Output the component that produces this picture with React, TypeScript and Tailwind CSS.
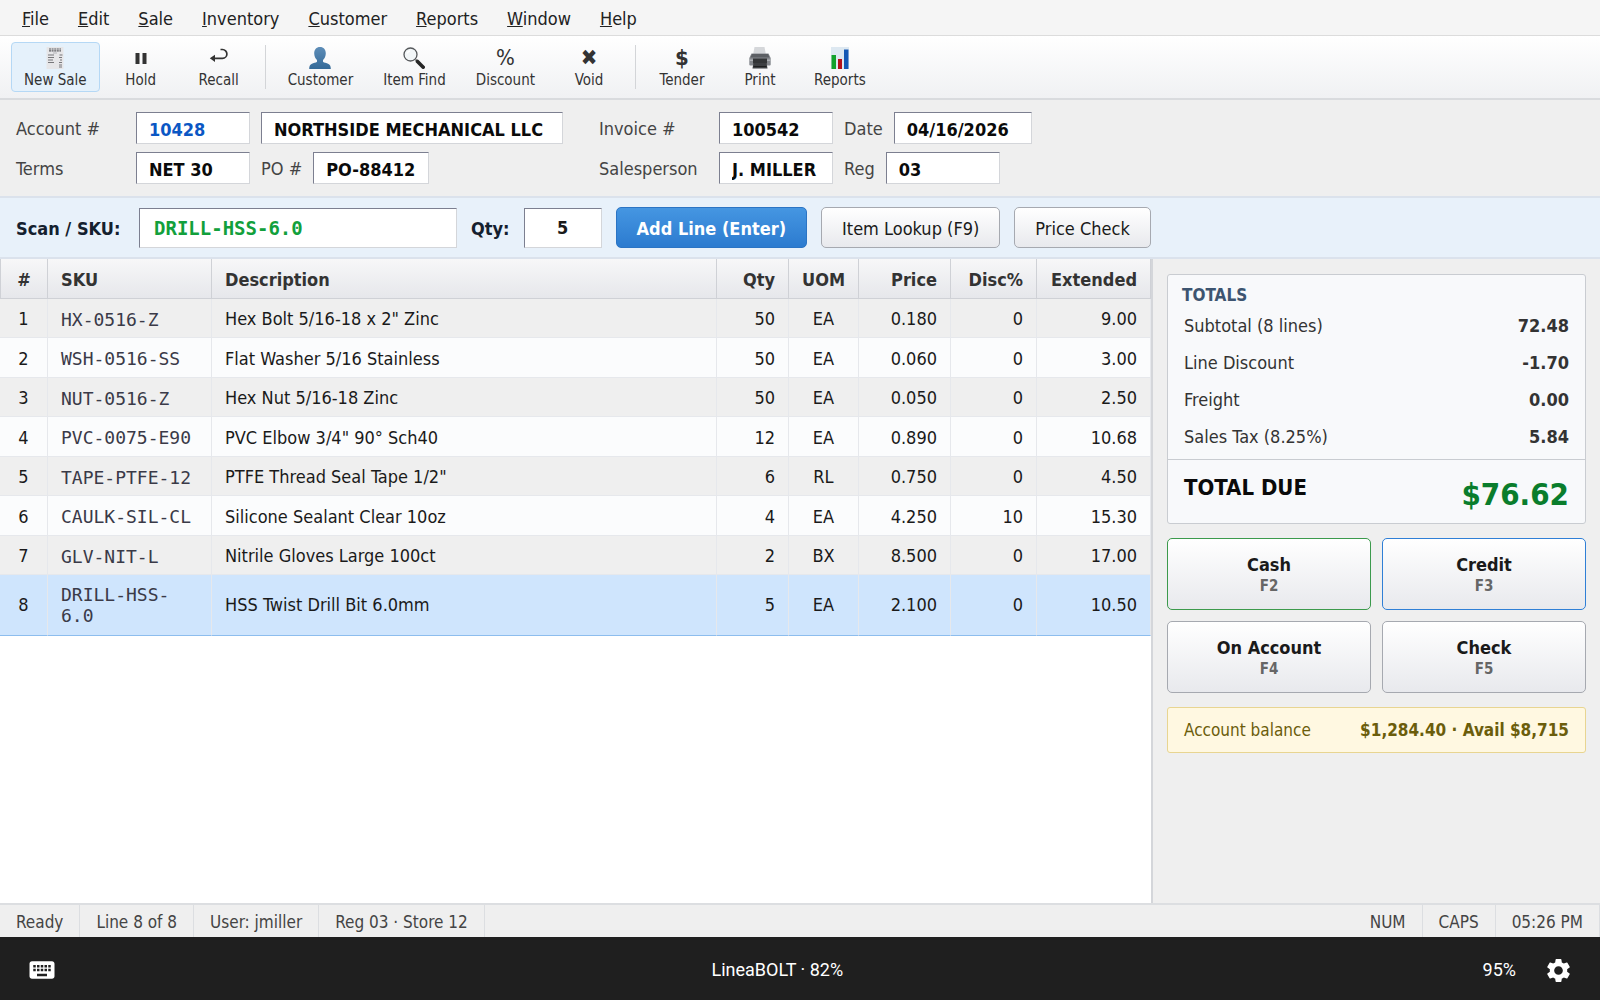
import { Fragment, useState } from "react";
import type { ReactNode } from "react";
import clsx from "clsx";
import { MdKeyboard, MdSettings } from "react-icons/md";

const ReceiptIcon = () => (
  <svg viewBox="0 0 22 22" className="size-[22px]">
    <path d="M2.500 0h17v22h-17z" fill="#e6e6e8" />
    <path d="M5 2h12M5 3.800h12" stroke="#5d5d60" strokeWidth="1.200" strokeDasharray="2 .6" />
    <path d="M4 8h6M4 10.500h6M4 13h5M4 15.500h6M15.500 8h3M15 10.500h3M16 13h2M15 15.500h3M15 18h3M15 20h3" stroke="#77777a" strokeWidth="1" />
    <path d="M9 6h4" stroke="#b4b4b8" strokeWidth="1" />
  </svg>
);

const PauseIcon = () => (
  <svg viewBox="0 0 22 22" className="size-[22px]" fill="#333">
    <path d="M5.500 6h4v11h-4zM12.500 6h4v11h-4z" />
  </svg>
);

const RecallIcon = () => (
  <svg viewBox="0 0 22 22" className="size-[22px]">
    <path d="M12.500 2.500h2a4.300 4.300 0 0 1 0 8.800H6" fill="none" stroke="#333" strokeWidth="1.700" />
    <path d="M1.800 11.300l5.200-3.600v7.200z" fill="#333" />
  </svg>
);

const PersonIcon = () => (
  <svg viewBox="0 0 22 22" className="size-[22px]">
    <defs>
      <linearGradient id="person" x1="0" y1="0" x2="0" y2="1">
        <stop offset="0" stopColor="#5d8db8" />
        <stop offset="1" stopColor="#356a98" />
      </linearGradient>
    </defs>
    <path
      d="M11 0c3.700 0 5.800 2.700 5.800 6.300 0 3-1.200 5.300-2.800 6.700v1.800c1 1 3.500 1.200 5.500 2.200 1.600.8 2.300 2.300 2.300 5H.2c0-2.700.7-4.200 2.300-5 2-1 4.500-1.200 5.500-2.200V13C6.400 11.600 5.200 9.300 5.200 6.300 5.200 2.700 7.300 0 11 0z"
      fill="url(#person)"
    />
  </svg>
);

const FindIcon = () => (
  <svg viewBox="0 0 22 22" className="size-[22px]">
    <path d="M12.500 12.500l3 3" stroke="#888" strokeWidth="2" />
    <path d="M14.500 14.500l5.700 5.700" stroke="#262626" strokeWidth="3.600" strokeLinecap="round" />
    <circle cx="7.500" cy="7.500" r="6.500" fill="#f2f6f8" stroke="#55585b" strokeWidth="1.300" />
    <path d="M4 6.500a4 4 0 0 1 3-2.500" stroke="#fff" strokeWidth="1.500" fill="none" />
  </svg>
);

const PrinterIcon = () => (
  <svg viewBox="0 0 22 22" className="size-[22px]">
    <path d="M5.500 0h10l1.500 8H4z" fill="#d5d7da" />
    <path d="M2.500 6.500h17l2.200 4.500v6.500q0 1-1 1H1.300q-1 0-1-1V11z" fill="#85888d" />
    <path d="M3 7h16l1.500 3.500h-19z" fill="#5c5f64" />
    <path d="M.5 12.500h21v1.500H.5z" fill="#b0b3b7" />
    <path d="M4 11.500h14v5H4z" fill="#333537" />
    <path d="M4.500 16h13l1 5.500h-15z" fill="#3d3f42" />
    <path d="M4.500 19.500h13" stroke="#1e1f20" strokeWidth="1" />
  </svg>
);

const ChartIcon = () => (
  <svg viewBox="0 0 22 22" className="size-[22px]">
    <path d="M2 0h18v22H2z" fill="#dde8f1" />
    <path d="M2.500 8h4.500v14H2.500z" fill="#13a22c" />
    <path d="M9 12h4v10H9z" fill="#b5121b" />
    <path d="M15 2.500h4.500V22H15z" fill="#1458b5" />
  </svg>
);

const Glyph = ({ children }: { children: ReactNode }) => (
  <span className="text-[22px] leading-[22px] text-[#333]">{children}</span>
);

const menus = ["File", "Edit", "Sale", "Inventory", "Customer", "Reports", "Window", "Help"];

const toolGroups = [
  [
    { label: "New Sale", icon: <ReceiptIcon />, active: true },
    { label: "Hold", icon: <PauseIcon /> },
    { label: "Recall", icon: <RecallIcon /> },
  ],
  [
    { label: "Customer", icon: <PersonIcon /> },
    { label: "Item Find", icon: <FindIcon /> },
    { label: "Discount", icon: <Glyph>%</Glyph> },
    { label: "Void", icon: <Glyph>✖</Glyph> },
  ],
  [
    { label: "Tender", icon: <Glyph><b>$</b></Glyph> },
    { label: "Print", icon: <PrinterIcon /> },
    { label: "Reports", icon: <ChartIcon /> },
  ],
];

const lines = [
  { sku: "HX-0516-Z", desc: 'Hex Bolt 5/16-18 x 2" Zinc', qty: 50, uom: "EA", price: "0.180", disc: 0, ext: "9.00" },
  { sku: "WSH-0516-SS", desc: "Flat Washer 5/16 Stainless", qty: 50, uom: "EA", price: "0.060", disc: 0, ext: "3.00" },
  { sku: "NUT-0516-Z", desc: "Hex Nut 5/16-18 Zinc", qty: 50, uom: "EA", price: "0.050", disc: 0, ext: "2.50" },
  { sku: "PVC-0075-E90", desc: 'PVC Elbow 3/4" 90° Sch40', qty: 12, uom: "EA", price: "0.890", disc: 0, ext: "10.68" },
  { sku: "TAPE-PTFE-12", desc: 'PTFE Thread Seal Tape 1/2"', qty: 6, uom: "RL", price: "0.750", disc: 0, ext: "4.50" },
  { sku: "CAULK-SIL-CL", desc: "Silicone Sealant Clear 10oz", qty: 4, uom: "EA", price: "4.250", disc: 10, ext: "15.30" },
  { sku: "GLV-NIT-L", desc: "Nitrile Gloves Large 100ct", qty: 2, uom: "BX", price: "8.500", disc: 0, ext: "17.00" },
  { sku: "DRILL-HSS-6.0", desc: "HSS Twist Drill Bit 6.0mm", qty: 5, uom: "EA", price: "2.100", disc: 0, ext: "10.50" },
];

const columns = [
  { title: "#", width: "w-12", align: "text-center" },
  { title: "SKU", width: "w-[164px]", align: "text-left" },
  { title: "Description", width: "", align: "text-left" },
  { title: "Qty", width: "w-[72px]", align: "text-right" },
  { title: "UOM", width: "w-[70px]", align: "text-center" },
  { title: "Price", width: "w-[92px]", align: "text-right" },
  { title: "Disc%", width: "w-[86px]", align: "text-right" },
  { title: "Extended", width: "w-[114px]", align: "text-right" },
];

const totals = [
  ["Subtotal (8 lines)", "72.48"],
  ["Line Discount", "-1.70"],
  ["Freight", "0.00"],
  ["Sales Tax (8.25%)", "5.84"],
];

const payments = [
  { label: "Cash", shortcut: "F2", border: "border-[#3c9a4c]" },
  { label: "Credit", shortcut: "F3", border: "border-[#2f7fd6]" },
  { label: "On Account", shortcut: "F4", border: "border-[#a6a9b0]" },
  { label: "Check", shortcut: "F5", border: "border-[#a6a9b0]" },
];

const sunken = "border border-t-[#7c7f90] border-l-[#7c7f90] border-r-[#d4d6da] border-b-[#d4d6da] bg-white";

interface FieldProps {
  id: string;
  label: string;
  value: string;
  labelClass?: string;
  className?: string;
}

function Field({ id, label, value, labelClass, className = "w-[114px] text-[#0a0a0a]" }: FieldProps) {
  return (
    <>
      <label htmlFor={id} className={clsx("pt-0.5 text-[#444]", labelClass)}>
        {label}
      </label>
      <input id={id} defaultValue={value} className={clsx("h-8 px-3 pt-0.5 font-bold", sunken, className)} />
    </>
  );
}

export default function App() {
  const [selected, setSelected] = useState(7);

  return (
    <div className="flex min-h-screen flex-col bg-[#efefef] font-['DejaVu_Sans_Condensed','Noto_Sans',sans-serif] text-[18px] leading-6 text-[#1a1a1a]">
      <nav className="flex h-9 items-center gap-px border-b border-[#dcdcdc] bg-[#f5f5f5] px-2 pt-0.5">
        {menus.map((menu) => (
          <button key={menu} className="px-[14px] text-[#222]">
            <span className="underline">{menu[0]}</span>
            {menu.slice(1)}
          </button>
        ))}
      </nav>

      <div className="flex h-16 items-center gap-1 border-b-2 border-[#d9dbde] bg-linear-to-b from-white to-[#f0f1f3] px-[11px]">
        {toolGroups.map((group, i) => (
          <Fragment key={i}>
            {i > 0 && <div className="mx-[5px] h-11 w-px bg-[#d3d5d8]" />}
            {group.map((tool) => (
              <button
                key={tool.label}
                className={clsx(
                  "flex h-[50px] min-w-[74px] flex-col items-center justify-center gap-px rounded border px-3 pt-0.5 text-[15px] leading-5 text-[#333]",
                  "active" in tool && tool.active ? "border-[#b5d8f5] bg-[#e5f1fb]" : "border-transparent"
                )}
              >
                {tool.icon}
                {tool.label}
              </button>
            ))}
          </Fragment>
        ))}
      </div>

      <section className="flex gap-9 border-b-2 border-[#dbe2ec] px-4 pt-3 pb-3">
        <div className="flex flex-col gap-2">
          <div className="flex items-center gap-[11px]">
            <Field id="account" label="Account #" value="10428" labelClass="w-[109px]" className="w-[114px] text-[#0b57c4]" />
            <input aria-label="Customer name" defaultValue="NORTHSIDE MECHANICAL LLC" className={clsx("h-8 w-[302px] px-3 pt-0.5 font-bold text-[#0a0a0a]", sunken)} />
          </div>
          <div className="flex items-center gap-[11px]">
            <Field id="terms" label="Terms" value="NET 30" labelClass="w-[109px]" />
            <Field id="po" label="PO #" value="PO-88412" className="w-[116px] text-[#0a0a0a]" />
          </div>
        </div>
        <div className="flex flex-col gap-2">
          <div className="flex items-center gap-[11px]">
            <Field id="invoice" label="Invoice #" value="100542" labelClass="w-[109px]" />
            <Field id="date" label="Date" value="04/16/2026" className="w-[138px] text-[#0a0a0a]" />
          </div>
          <div className="flex items-center gap-[11px]">
            <Field id="salesperson" label="Salesperson" value="J. MILLER" labelClass="w-[109px]" />
            <Field id="register" label="Reg" value="03" />
          </div>
        </div>
      </section>

      <form className="flex h-[61px] items-center gap-[14px] border-b-2 border-[#dbe2ec] bg-[#e8f1fa] px-4" onSubmit={(e) => e.preventDefault()}>
        <label htmlFor="sku" className="w-[109px] pt-0.5 font-bold text-[#14202e]">
          Scan / SKU:
        </label>
        <input
          id="sku"
          defaultValue="DRILL-HSS-6.0"
          className={clsx("h-10 w-[318px] px-[14px] font-['DejaVu_Sans_Mono',monospace] text-[19px] font-bold text-[#12a03c]", sunken)}
        />
        <label htmlFor="qty" className="pt-0.5 font-bold text-[#14202e]">
          Qty:
        </label>
        <input id="qty" defaultValue="5" className={clsx("h-10 w-[78px] text-center font-bold", sunken)} />
        <button className="h-[41px] rounded-[5px] border border-[#2b74c4] bg-linear-to-b from-[#4596e2] to-[#2c7bcf] px-5 pt-0.5 font-bold text-white">
          Add Line (Enter)
        </button>
        <button type="button" className="h-[41px] rounded-[5px] border border-[#a6a9b0] bg-linear-to-b from-white to-[#e8e9ed] px-5 pt-0.5">
          Item Lookup (F9)
        </button>
        <button type="button" className="h-[41px] rounded-[5px] border border-[#a6a9b0] bg-linear-to-b from-white to-[#e8e9ed] px-5 pt-0.5">
          Price Check
        </button>
      </form>

      <main className="flex flex-1">
        <div className="flex-1 bg-white">
          <table className="w-full table-fixed border-separate border-spacing-0">
            <thead>
              <tr className="h-10">
                {columns.map((col) => (
                  <th
                    key={col.title}
                    className={clsx(
                      "border-r border-b border-[#cfd1d6] bg-linear-to-b from-[#f7f7f8] to-[#e6e7eb] px-[13px] pt-0.5 text-[#333] first:border-l first:px-0",
                      col.title === "UOM" && "px-0",
                      col.width,
                      col.align
                    )}
                  >
                    {col.title}
                  </th>
                ))}
              </tr>
            </thead>
            <tbody>
              {lines.map((line, i) => {
                const cells = [i + 1, line.sku, line.desc, line.qty, line.uom, line.price, line.disc, line.ext];
                return (
                  <tr
                    key={line.sku}
                    onClick={() => setSelected(i)}
                    className={clsx(
                      "odd:h-[39px] even:h-10",
                      i === selected ? "bg-[#cfe5fd]" : "odd:bg-[#efefef] even:bg-[#fbfcfd]"
                    )}
                  >
                    {cells.map((cell, c) => (
                      <td
                        key={c}
                        className={clsx(
                          "border-r border-b border-r-[#e6e8ec] px-[13px] first:px-0",
                          i === selected ? "border-b-[#8dbdee] py-[9px]" : "border-b-[#e6e8ec] pt-0.5",
                          c === 1 && "font-['DejaVu_Sans_Mono',monospace] leading-[21px] text-[#3a3a48]",
                          columns[c].align
                        )}
                      >
                        {cell}
                      </td>
                    ))}
                  </tr>
                );
              })}
            </tbody>
          </table>
        </div>

        <aside className="flex w-[449px] flex-col gap-[14px] border-l-2 border-[#d4d6da] p-[14px] pt-[15px]">
          <section className="rounded-[3px] border border-[#c9ccd1] bg-[#f8f9fb]">
            <h2 className="px-[14px] pt-2 text-[17px] font-bold text-[#3d5470]">TOTALS</h2>
            <dl>
              {totals.map(([label, value]) => (
                <div key={label} className="flex h-[37px] items-center justify-between px-4 text-[#333]">
                  <dt>{label}</dt>
                  <dd className="font-bold">{value}</dd>
                </div>
              ))}
              <div className="mt-1 flex h-16 items-start justify-between border-t border-[#c9ccd1] px-4 pt-4">
                <dt className="text-[22px] font-bold text-[#0a0a0a]">TOTAL DUE</dt>
                <dd className="text-[31px] leading-9 font-bold text-[#0a7d2c]">$76.62</dd>
              </div>
            </dl>
          </section>

          <div className="grid grid-cols-2 gap-[11px]">
            {payments.map((pay) => (
              <button
                key={pay.label}
                className={clsx(
                  "flex h-[72px] flex-col items-center justify-center rounded-[5px] border bg-linear-to-b from-white to-[#e8e9ed] pt-0.5 font-bold",
                  pay.border
                )}
              >
                <span className="leading-[22px]">{pay.label}</span>
                <span className="text-[15px] leading-5 text-[#666]">{pay.shortcut}</span>
              </button>
            ))}
          </div>

          <div className="flex h-[46px] items-center justify-between rounded-[3px] border border-[#e8d591] bg-[#fff8e1] px-4 text-[17px] text-[#6b5d0b]">
            <span>Account balance</span>
            <strong>$1,284.40 · Avail $8,715</strong>
          </div>
        </aside>
      </main>

      <footer className="flex h-[34px] items-stretch border-t-2 border-[#dcdee1] text-[17px] leading-8 text-[#444]">
        {["Ready", "Line 8 of 8", "User: jmiller", "Reg 03 · Store 12"].map((item) => (
          <span key={item} className="border-r border-[#dcdee1] px-4 pt-px">
            {item}
          </span>
        ))}
        <span className="flex-1" />
        {["NUM", "CAPS", "05:26 PM"].map((item) => (
          <span key={item} className="border-r border-[#dcdee1] px-4 pt-px">
            {item}
          </span>
        ))}
      </footer>

      <div className="flex h-[63px] items-center justify-between bg-[#1f1f1f] px-3 pt-[3px] font-[Roboto,sans-serif] text-white">
        <button aria-label="Keyboard" className="flex w-[60px] justify-center">
          <MdKeyboard className="size-[30px]" />
        </button>
        <span>LineaBOLT · 82%</span>
        <div className="flex items-center gap-3">
          <span>95%</span>
          <button aria-label="Settings" className="flex w-[60px] justify-center">
            <MdSettings className="size-[29px]" />
          </button>
        </div>
      </div>
    </div>
  );
}
